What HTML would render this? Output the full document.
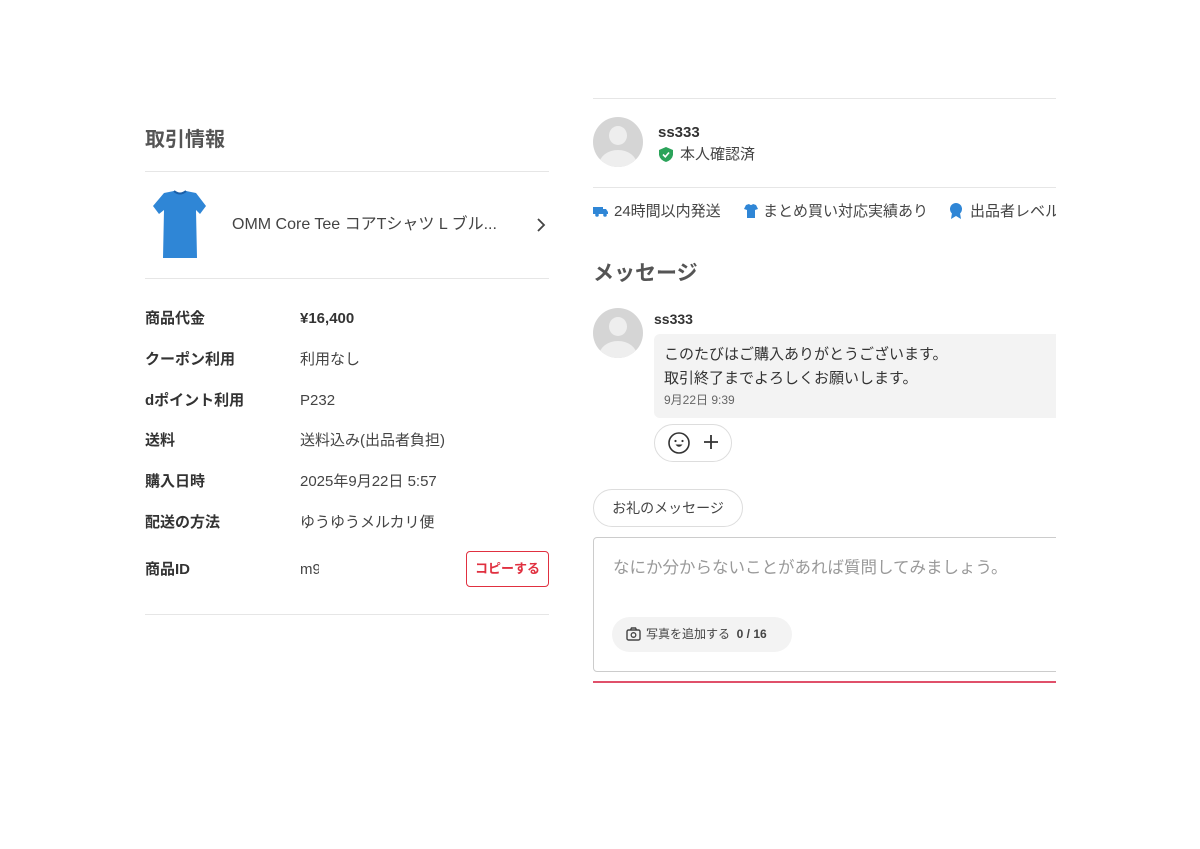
<!DOCTYPE html>
<html><head><meta charset="utf-8"><style>
*{margin:0;padding:0;box-sizing:border-box}
body{width:1200px;height:849px;background:#fff;font-family:"Liberation Sans","Noto Sans CJK JP",sans-serif;color:#333;position:relative;overflow:hidden}
.a{position:absolute;white-space:nowrap;line-height:20px}
.hr{position:absolute;height:1px;background:#e6e6e6}
.lbl{font-size:15px;font-weight:bold;color:#333}
.val{font-size:15px;color:#444}
#r{position:absolute;left:593px;top:0;width:463px;height:849px;overflow:hidden}
.av{position:absolute;width:50px;height:50px;border-radius:50%;background:#d5d5d5;overflow:hidden}
.av:before{content:"";position:absolute;left:16px;top:9px;width:18px;height:19px;border-radius:50%;background:#eee}
.av:after{content:"";position:absolute;left:6px;top:33px;width:38px;height:30px;border-radius:50%;background:#eee}
</style></head><body>
<div class="a" style="left:145px;top:127px;font-size:20px;line-height:26px;font-weight:bold;color:#555">取引情報</div>
<div class="hr" style="left:145px;top:171px;width:404px"></div>
<svg class="a" style="left:150px;top:190px" width="60" height="70" viewBox="0 0 60 70"><path d="M14 3 L24 1 Q30 5 36 1 L46 3 L56 16 L50 24 L46 20 L47 68 L13 68 L14 20 L9 24 L3 16 Z" fill="#2f86d6"/><path d="M24 1 Q30 6 36 1" stroke="#1a5fa8" stroke-width="2" fill="none"/></svg>
<div class="a" style="left:232px;top:215px;font-size:16px;color:#444">OMM Core Tee コアTシャツ L ブル...</div>
<svg class="a" style="left:535px;top:217px" width="12" height="16"><path d="M3 2 L9 8 L3 14" stroke="#444" stroke-width="1.8" fill="none"/></svg>
<div class="hr" style="left:145px;top:278px;width:404px"></div>
<div class="a lbl" style="left:145px;top:309px">商品代金</div><div class="a" style="left:300px;top:309px;font-size:15px;font-weight:bold">¥16,400</div>
<div class="a lbl" style="left:145px;top:350px">クーポン利用</div><div class="a val" style="left:300px;top:350px">利用なし</div>
<div class="a lbl" style="left:145px;top:391px">dポイント利用</div><div class="a val" style="left:300px;top:391px">P232</div>
<div class="a lbl" style="left:145px;top:431px">送料</div><div class="a val" style="left:300px;top:431px">送料込み(出品者負担)</div>
<div class="a lbl" style="left:145px;top:472px">購入日時</div><div class="a val" style="left:300px;top:472px">2025年9月22日 5:57</div>
<div class="a lbl" style="left:145px;top:513px">配送の方法</div><div class="a val" style="left:300px;top:513px">ゆうゆうメルカリ便</div>
<div class="a lbl" style="left:145px;top:560px">商品ID</div><div class="a val" style="left:300px;top:560px;width:19px;overflow:hidden">m9</div>
<div class="a" style="left:466px;top:551px;width:83px;height:36px;border:1px solid #e03040;border-radius:4px;color:#e03040;font-size:13px;font-weight:bold;text-align:center;line-height:34px">コピーする</div>
<div class="hr" style="left:145px;top:614px;width:404px"></div>

<div id="r">
<div class="hr" style="left:0;top:98px;width:463px"></div>
<div class="av" style="left:0;top:117px"></div>
<div class="a" style="left:65px;top:123px;font-size:15px;font-weight:bold">ss333</div>
<svg class="a" style="left:66px;top:147px" width="14" height="15" viewBox="0 0 14 15"><path d="M7 0 L14 3 V8 Q13 13 7 15 Q1 13 0 8 V3 Z" fill="#2ba35a"/><path d="M4 7.5 L6.3 9.8 L10 5.5" stroke="#fff" stroke-width="1.6" fill="none"/></svg>
<div class="a" style="left:87px;top:145px;font-size:15px;color:#444">本人確認済</div>
<div class="hr" style="left:0;top:187px;width:463px"></div>
<svg class="a" style="left:0;top:205px" width="16" height="12"><rect x="0" y="2" width="10" height="7" fill="#2f86d6"/><path d="M10 4 H13 L15 7 V9 H10Z" fill="#2f86d6"/><circle cx="4" cy="10" r="1.8" fill="#2f86d6"/><circle cx="12" cy="10" r="1.8" fill="#2f86d6"/></svg>
<div class="a" style="left:21px;top:202px;font-size:15px;color:#444">24時間以内発送</div>
<svg class="a" style="left:150px;top:203px" width="16" height="16"><path d="M3 2 L6 1 Q8 3 10 1 L13 2 L15 6 L12 7 V15 H4 V7 L1 6Z" fill="#2f86d6"/></svg>
<div class="a" style="left:170px;top:202px;font-size:15px;color:#444">まとめ買い対応実績あり</div>
<svg class="a" style="left:356px;top:203px" width="14" height="17"><circle cx="7" cy="6" r="6" fill="#2f86d6"/><path d="M3 10 L2 16 L7 13 L12 16 L11 10Z" fill="#2f86d6"/></svg>
<div class="a" style="left:377px;top:202px;font-size:15px;color:#444">出品者レベル</div>
<div class="a" style="left:0;top:260px;font-size:21px;line-height:27px;font-weight:bold;color:#555">メッセージ</div>
<div class="av" style="left:0;top:308px"></div>
<div class="a" style="left:61px;top:309px;font-size:14px;font-weight:bold">ss333</div>
<div class="a" style="left:61px;top:334px;width:420px;height:84px;background:#f3f3f3;border-radius:6px"></div>
<div class="a" style="left:71px;top:343px;font-size:15px;line-height:24px;color:#333">このたびはご購入ありがとうございます。<br>取引終了までよろしくお願いします。</div>
<div class="a" style="left:71px;top:390px;font-size:12px;color:#666">9月22日 9:39</div>
<div class="a" style="left:61px;top:424px;width:78px;height:38px;border:1px solid #ddd;border-radius:19px"></div>
<svg class="a" style="left:74px;top:431px" width="24" height="24"><circle cx="12" cy="12" r="10" stroke="#333" stroke-width="1.6" fill="none"/><circle cx="8.5" cy="10" r="1.1" fill="#333"/><circle cx="15.5" cy="10" r="1.1" fill="#333"/><path d="M8.5 13.5 Q12 18 15.5 13.5Z" fill="#333"/></svg>
<svg class="a" style="left:111px;top:435px" width="14" height="14"><path d="M7 0V14M0 7H14" stroke="#333" stroke-width="1.8"/></svg>
<div class="a" style="left:0;top:489px;width:150px;height:38px;border:1px solid #ddd;border-radius:19px;font-size:14px;color:#444;text-align:center;line-height:36px">お礼のメッセージ</div>
<div class="a" style="left:0;top:537px;width:480px;height:135px;border:1px solid #ccc;border-radius:4px"></div>
<div class="a" style="left:20px;top:557px;font-size:16.5px;line-height:22px;color:#999">なにか分からないことがあれば質問してみましょう。</div>
<div class="a" style="left:19px;top:617px;width:180px;height:35px;background:#f3f3f3;border-radius:18px"></div>
<svg class="a" style="left:33px;top:627px" width="15" height="14"><rect x="1" y="3" width="13" height="10" rx="1.5" stroke="#444" stroke-width="1.4" fill="none"/><path d="M4.5 3 L5.5 1 H9.5 L10.5 3" stroke="#444" stroke-width="1.4" fill="none"/><circle cx="7.5" cy="8" r="2.3" stroke="#444" stroke-width="1.3" fill="none"/></svg>
<div class="a" style="left:53px;top:624px;font-size:12px;color:#444">写真を追加する&nbsp;&nbsp;<b>0 / 16</b></div>
<div class="a" style="left:0;top:681px;width:480px;height:2px;background:#e0506a"></div>
</div>
</body></html>
